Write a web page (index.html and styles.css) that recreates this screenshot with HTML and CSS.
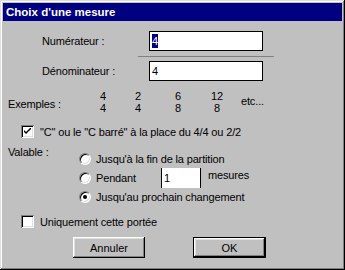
FILE: index.html
```html
<!DOCTYPE html>
<html lang="fr">
<head>
    <meta charset="UTF-8">
    <title>Choix d'une mesure</title>
    <link rel="stylesheet" href="styles.css">
</head>
<body>
    <div class="window">
        <div class="title-bar">Choix d'une mesure</div>

        <div class="content">
            <div class="field first">
                <span class="field-label">Numérateur :</span>
                <div class="text-box"><span class="selected">4</span></div>
            </div>
            <div class="separator"></div>
            <div class="field">
                <span class="field-label">Dénominateur :</span>
                <div class="text-box">4</div>
            </div>

            <div class="examples">
                <span class="examples-label">Exemples :</span>
                <div class="fraction"><span>4</span><span>4</span></div>
                <div class="fraction"><span>2</span><span>4</span></div>
                <div class="fraction"><span>6</span><span>8</span></div>
                <div class="fraction"><span>12</span><span>8</span></div>
                <span class="etc">etc...</span>
            </div>

            <label class="check-row symbol-row">
                <span class="checkbox">
                    <svg width="7" height="7" viewBox="0 0 7 7">
                        <path d="M0 2 L0 4 L2 6 L7 1 L7 -1 L2 4 Z" fill="#000"/>
                    </svg>
                </span>
                <span>"C" ou le "C barré" à la place du 4/4 ou 2/2</span>
            </label>

            <div class="valable">
                <span class="valable-label">Valable :</span>
                <div class="radios">
                    <div class="radio-row">
                        <span class="radio"></span>
                        <span>Jusqu'à la fin de la partition</span>
                    </div>
                    <div class="radio-row">
                        <span class="radio"></span>
                        <span class="pendant">Pendant</span>
                        <div class="count-box">1</div>
                        <span class="mesures">mesures</span>
                    </div>
                    <div class="radio-row">
                        <span class="radio checked"></span>
                        <span>Jusqu'au prochain changement</span>
                    </div>
                </div>
            </div>

            <label class="check-row only-row">
                <span class="checkbox"></span>
                <span>Uniquement cette portée</span>
            </label>

            <div class="buttons">
                <button class="btn">Annuler</button>
                <button class="btn default">OK</button>
            </div>
        </div>
    </div>
</body>
</html>
```

FILE: styles.css
```css
html, body {
    margin: 0;
    padding: 0;
}
body {
    font-family: "Liberation Sans", Arial, sans-serif;
    font-size: 11px;
    letter-spacing: -0.15px;
    color: #000;
    background: #c0c0c0;
}
.window {
    width: 345px;
    height: 270px;
    box-sizing: border-box;
    padding: 3px;
    background: #c0c0c0;
    box-shadow: inset -1px -1px #000, inset 1px 1px #dfdfdf,
                inset -2px -2px #808080, inset 2px 2px #fff;
}
.title-bar {
    height: 18px;
    line-height: 18px;
    background: #000080;
    color: #fff;
    font-weight: bold;
    font-size: 11.5px;
    letter-spacing: 0;
    padding-left: 3px;
}
.content {
    display: flex;
    flex-direction: column;
    align-items: flex-start;
}
.field {
    display: flex;
    align-items: center;
    margin-left: 39px;
}
.field.first {
    margin-top: 10px;
}
.field-label {
    width: 107px;
}
.text-box {
    width: 114px;
    height: 20px;
    box-sizing: border-box;
    border: 1px solid #000;
    background: #fff;
    line-height: 18px;
    padding-left: 2px;
}
.selected {
    background: #000080;
    color: #fff;
    padding: 1px 0;
}
.separator {
    width: 136px;
    height: 1px;
    background: #808080;
    margin: 5px 0 4px 135px;
}
.examples {
    display: flex;
    align-items: center;
    margin: 9px 0 0 5px;
    line-height: 12px;
}
.examples-label {
    width: 80px;
    margin-top: 3px;
}
.fraction {
    display: flex;
    flex-direction: column;
    text-align: center;
    width: 30px;
}
.fraction + .fraction {
    width: 40px;
}
.fraction:nth-child(5) {
    width: 38px;
}
.etc {
    margin-left: 5px;
    margin-top: -2px;
}
.check-row {
    display: flex;
    align-items: center;
    gap: 6px;
    margin-left: 18px;
    height: 13px;
}
.symbol-row {
    margin-top: 11px;
}
.only-row {
    margin-top: 9px;
}
.checkbox {
    width: 13px;
    height: 13px;
    box-sizing: border-box;
    background: #fff;
    box-shadow: inset 1px 1px #808080, inset -1px -1px #fff,
                inset 2px 2px #000, inset -2px -2px #dfdfdf;
    display: flex;
    align-items: center;
    justify-content: center;
}
.valable {
    display: flex;
    margin: 8px 0 0 5px;
}
.valable-label {
    width: 71px;
    line-height: 13px;
}
.radios {
    padding-top: 3px;
}
.radio-row {
    display: flex;
    align-items: center;
    height: 19px;
}
.radio {
    width: 12px;
    height: 12px;
    box-sizing: border-box;
    border-radius: 50%;
    background: #fff;
    border: 1px solid;
    border-color: #808080 #fff #fff #808080;
    box-shadow: inset 1px 1px #000, inset -1px -1px #dfdfdf;
    margin-right: 5px;
    position: relative;
}
.radio.checked::after {
    content: "";
    position: absolute;
    left: 3px;
    top: 3px;
    width: 4px;
    height: 4px;
    border-radius: 50%;
    background: #000;
}
.pendant {
    width: 65px;
}
.count-box {
    width: 40px;
    height: 20px;
    box-sizing: border-box;
    background: #fff;
    border-left: 1px solid #000;
    border-right: 1px solid #000;
    line-height: 20px;
    padding-left: 2px;
}
.mesures {
    margin-left: 7px;
    margin-top: -5px;
}
.buttons {
    display: flex;
    gap: 48px;
    margin: 9px 0 0 70px;
}
.btn {
    width: 72px;
    height: 21px;
    padding: 0;
    border: none;
    background: #c0c0c0;
    font-family: "Liberation Sans", Arial, sans-serif;
    font-size: 11px;
    color: #000;
    box-shadow: inset -1px -1px #000, inset 1px 1px #fff,
                inset -2px -2px #808080, inset 2px 2px #dfdfdf;
}
.btn.default {
    width: 73px;
    border: 1px solid #000;
}
```
